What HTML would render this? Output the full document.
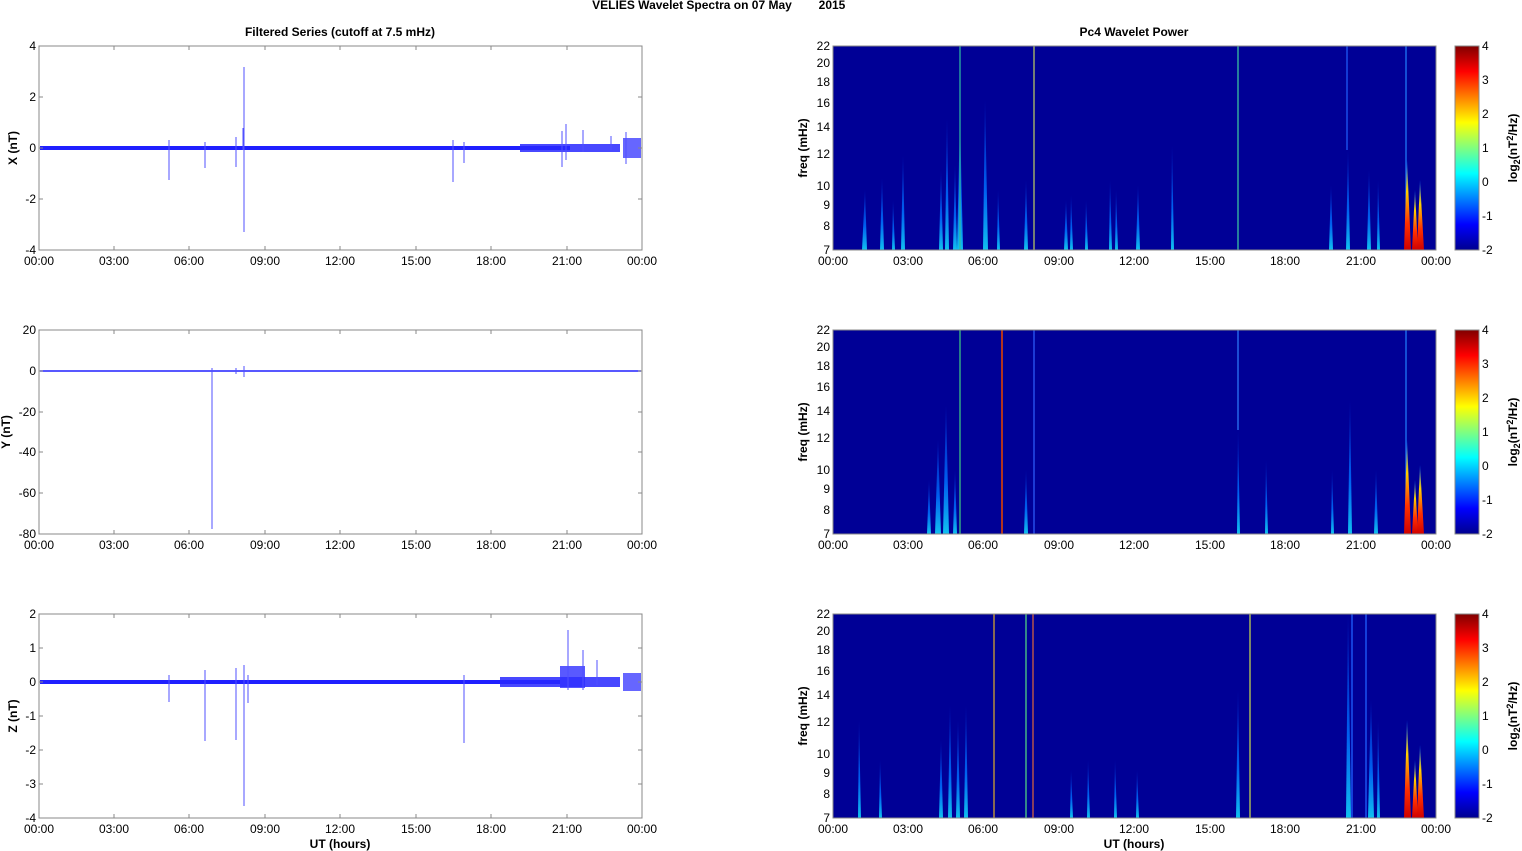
<!DOCTYPE html>
<html><head><meta charset="utf-8"><style>
html,body{margin:0;padding:0;background:#fff;}
svg{display:block;font-family:"Liberation Sans",Arial,sans-serif;}
.t{font-size:12px;fill:#000;}
.b{font-size:12px;font-weight:bold;fill:#000;}
</style></head><body>
<svg width="1522" height="851" viewBox="0 0 1522 851" xmlns="http://www.w3.org/2000/svg">
<defs>
<linearGradient id="jet" x1="0" y1="1" x2="0" y2="0">
<stop offset="0" stop-color="#00008f"/><stop offset="0.125" stop-color="#0000ff"/>
<stop offset="0.375" stop-color="#00ffff"/><stop offset="0.625" stop-color="#ffff00"/>
<stop offset="0.875" stop-color="#ff0000"/><stop offset="1" stop-color="#800000"/>
</linearGradient>
<linearGradient id="sg" x1="0" y1="0" x2="0" y2="1">
<stop offset="0" stop-color="#0010b0"/><stop offset="0.6" stop-color="#0060f0"/><stop offset="1" stop-color="#10c0f0"/>
</linearGradient>
<linearGradient id="hot" x1="0" y1="0" x2="0" y2="1">
<stop offset="0" stop-color="#0060ff"/><stop offset="0.35" stop-color="#ffd000"/><stop offset="0.7" stop-color="#ff3000"/><stop offset="1" stop-color="#d00000"/>
</linearGradient>
</defs>

<text x="692" y="9" class="b" text-anchor="middle">VELIES Wavelet Spectra on 07 May</text>
<text x="832" y="9" class="b" text-anchor="middle">2015</text>
<text x="340" y="36" class="b" text-anchor="middle">Filtered Series (cutoff at 7.5 mHz)</text>
<text x="1134" y="36" class="b" text-anchor="middle">Pc4 Wavelet Power</text>

<!-- Panel X -->
<g>
<rect x="39" y="46" width="603" height="204" fill="#fff" stroke="#888" stroke-width="1"/>
<rect x="40" y="146" width="530" height="4" fill="#2020ff"/>
<rect x="520" y="144" width="100" height="8" fill="#2828ff" opacity="0.85"/>
<rect x="623" y="138" width="18" height="20" fill="#4040ff" opacity="0.8"/>
<g stroke="#5050ff" stroke-width="1">
<line x1="244" y1="67" x2="244" y2="232"/><line x1="243" y1="128" x2="243" y2="150"/>
<line x1="169" y1="140" x2="169" y2="180"/><line x1="205" y1="142" x2="205" y2="168"/>
<line x1="236" y1="137" x2="236" y2="167"/><line x1="453" y1="140" x2="453" y2="182"/>
<line x1="464" y1="142" x2="464" y2="163"/><line x1="562" y1="131" x2="562" y2="167"/>
<line x1="566" y1="124" x2="566" y2="160"/><line x1="583" y1="130" x2="583" y2="152"/>
<line x1="611" y1="136" x2="611" y2="150"/><line x1="626" y1="132" x2="626" y2="164"/>
</g>
</g>
<!-- Panel Y -->
<g>
<rect x="39" y="330" width="603" height="204" fill="#fff" stroke="#888" stroke-width="1"/>
<line x1="40" y1="371" x2="641" y2="371" stroke="#2020ff" stroke-width="1.5"/>
<line x1="212" y1="368" x2="212" y2="529" stroke="#5050ff"/>
<line x1="244" y1="366" x2="244" y2="377" stroke="#5050ff"/>
<line x1="236" y1="368" x2="236" y2="374" stroke="#5050ff"/>
</g>
<!-- Panel Z -->
<g>
<rect x="39" y="614" width="603" height="204" fill="#fff" stroke="#888" stroke-width="1"/>
<rect x="40" y="680" width="520" height="4" fill="#2020ff"/>
<rect x="500" y="677" width="120" height="10" fill="#2828ff" opacity="0.85"/>
<rect x="560" y="666" width="25" height="22" fill="#3030ff" opacity="0.8"/>
<rect x="623" y="673" width="18" height="18" fill="#4040ff" opacity="0.8"/>
<g stroke="#5050ff" stroke-width="1">
<line x1="244" y1="665" x2="244" y2="806"/><line x1="205" y1="670" x2="205" y2="741"/>
<line x1="236" y1="668" x2="236" y2="740"/><line x1="248" y1="675" x2="248" y2="703"/>
<line x1="169" y1="675" x2="169" y2="702"/><line x1="464" y1="675" x2="464" y2="743"/>
<line x1="568" y1="630" x2="568" y2="690"/><line x1="583" y1="650" x2="583" y2="690"/>
<line x1="597" y1="660" x2="597" y2="685"/>
</g>
</g>

<g stroke="#888" stroke-width="1">
<path d="M114,46v4M189,46v4M265,46v4M340,46v4M416,46v4M491,46v4M567,46v4M114,250v-4M189,250v-4M265,250v-4M340,250v-4M416,250v-4M491,250v-4M567,250v-4M39,97h4M39,148h4M39,199h4M642,97h-4M642,148h-4M642,199h-4"/>
<path d="M114,330v4M189,330v4M265,330v4M340,330v4M416,330v4M491,330v4M567,330v4M114,534v-4M189,534v-4M265,534v-4M340,534v-4M416,534v-4M491,534v-4M567,534v-4M39,371h4M39,412h4M39,452h4M39,493h4M642,371h-4M642,412h-4M642,452h-4M642,493h-4"/>
<path d="M114,614v4M189,614v4M265,614v4M340,614v4M416,614v4M491,614v4M567,614v4M114,818v-4M189,818v-4M265,818v-4M340,818v-4M416,818v-4M491,818v-4M567,818v-4M39,648h4M39,682h4M39,716h4M39,750h4M39,784h4M642,648h-4M642,682h-4M642,716h-4M642,750h-4M642,784h-4"/>
</g>
<g class="t" text-anchor="end">
<text x="36" y="50">4</text><text x="36" y="101">2</text><text x="36" y="152">0</text><text x="36" y="203">-2</text><text x="36" y="254">-4</text>
<text x="36" y="334">20</text><text x="36" y="375">0</text><text x="36" y="416">-20</text><text x="36" y="456">-40</text><text x="36" y="497">-60</text><text x="36" y="538">-80</text>
<text x="36" y="618">2</text><text x="36" y="652">1</text><text x="36" y="686">0</text><text x="36" y="720">-1</text><text x="36" y="754">-2</text><text x="36" y="788">-3</text><text x="36" y="822">-4</text>
</g>
<g class="b" text-anchor="middle">
<text transform="translate(17,148) rotate(-90)">X (nT)</text>
<text transform="translate(10,432) rotate(-90)">Y (nT)</text>
<text transform="translate(17,716) rotate(-90)">Z (nT)</text>
<text transform="translate(807,148) rotate(-90)">freq (mHz)</text>
<text transform="translate(807,432) rotate(-90)">freq (mHz)</text>
<text transform="translate(807,716) rotate(-90)">freq (mHz)</text>
<text x="340" y="848">UT (hours)</text>
<text x="1134" y="848">UT (hours)</text>
</g>
<g class="t" text-anchor="middle">
<g><text x="39" y="265">00:00</text><text x="114" y="265">03:00</text><text x="189" y="265">06:00</text><text x="265" y="265">09:00</text><text x="340" y="265">12:00</text><text x="416" y="265">15:00</text><text x="491" y="265">18:00</text><text x="567" y="265">21:00</text><text x="642" y="265">00:00</text></g>
<g transform="translate(0,284)"><text x="39" y="265">00:00</text><text x="114" y="265">03:00</text><text x="189" y="265">06:00</text><text x="265" y="265">09:00</text><text x="340" y="265">12:00</text><text x="416" y="265">15:00</text><text x="491" y="265">18:00</text><text x="567" y="265">21:00</text><text x="642" y="265">00:00</text></g>
<g transform="translate(0,568)"><text x="39" y="265">00:00</text><text x="114" y="265">03:00</text><text x="189" y="265">06:00</text><text x="265" y="265">09:00</text><text x="340" y="265">12:00</text><text x="416" y="265">15:00</text><text x="491" y="265">18:00</text><text x="567" y="265">21:00</text><text x="642" y="265">00:00</text></g>
<g transform="translate(794,0)"><text x="39" y="265">00:00</text><text x="114" y="265">03:00</text><text x="189" y="265">06:00</text><text x="265" y="265">09:00</text><text x="340" y="265">12:00</text><text x="416" y="265">15:00</text><text x="491" y="265">18:00</text><text x="567" y="265">21:00</text><text x="642" y="265">00:00</text></g>
<g transform="translate(794,284)"><text x="39" y="265">00:00</text><text x="114" y="265">03:00</text><text x="189" y="265">06:00</text><text x="265" y="265">09:00</text><text x="340" y="265">12:00</text><text x="416" y="265">15:00</text><text x="491" y="265">18:00</text><text x="567" y="265">21:00</text><text x="642" y="265">00:00</text></g>
<g transform="translate(794,568)"><text x="39" y="265">00:00</text><text x="114" y="265">03:00</text><text x="189" y="265">06:00</text><text x="265" y="265">09:00</text><text x="340" y="265">12:00</text><text x="416" y="265">15:00</text><text x="491" y="265">18:00</text><text x="567" y="265">21:00</text><text x="642" y="265">00:00</text></g>
</g>

<!-- Panel 1 -->
<g>
<rect x="833" y="46" width="603" height="204" fill="#000096"/>
<g fill="url(#sg)">
<polygon points="862,250 865,190 867,250"/><polygon points="880,250 882,178 884,250"/>
<polygon points="892,250 893,200 895,250"/><polygon points="901,250 903,155 905,250"/>
<polygon points="939,250 941,170 943,250"/><polygon points="945,250 947,118 949,250"/>
<polygon points="953,250 955,165 957,250"/><polygon points="957,250 960,115 963,250"/>
<polygon points="983,250 985,100 988,250"/><polygon points="997,250 998,190 1000,250"/>
<polygon points="1024,250 1026,180 1028,250"/><polygon points="1064,250 1066,200 1068,250"/>
<polygon points="1070,250 1071,195 1073,250"/><polygon points="1085,250 1086,200 1088,250"/>
<polygon points="1109,250 1110,180 1112,250"/><polygon points="1115,250 1116,190 1118,250"/>
<polygon points="1136,250 1138,185 1140,250"/><polygon points="1171,250 1172,145 1174,250"/>
<polygon points="1329,250 1331,185 1333,250"/><polygon points="1346,250 1348,150 1350,250"/>
<polygon points="1367,250 1369,170 1371,250"/><polygon points="1377,250 1378,180 1380,250"/>
</g>
<g stroke-width="1.2">
<line x1="960" y1="46" x2="960" y2="250" stroke="#30c0a0"/>
<line x1="1034" y1="46" x2="1034" y2="250" stroke="#c0d060"/>
<line x1="1238" y1="46" x2="1238" y2="250" stroke="#40d0a0"/>
<line x1="1347" y1="46" x2="1347" y2="150" stroke="#2060ff"/>
<line x1="1406" y1="46" x2="1406" y2="250" stroke="#2080ff"/>
</g>
<polygon points="1404,250 1407,160 1411,250" fill="url(#hot)"/>
<polygon points="1412,250 1415,190 1418,250" fill="url(#hot)"/>
<polygon points="1417,250 1420,180 1424,250" fill="url(#hot)"/>
<rect x="833" y="46" width="603" height="204" fill="none" stroke="#888"/>
</g>
<!-- Panel 2 -->
<g>
<rect x="833" y="330" width="603" height="204" fill="#000096"/>
<g fill="url(#sg)">
<polygon points="927,534 929,480 931,534"/><polygon points="935,534 938,440 941,534"/>
<polygon points="943,534 946,405 949,534"/><polygon points="953,534 955,470 957,534"/>
<polygon points="1024,534 1026,470 1028,534"/><polygon points="1237,534 1238,430 1240,534"/>
<polygon points="1265,534 1266,460 1268,534"/><polygon points="1331,534 1332,470 1334,534"/>
<polygon points="1348,534 1350,400 1352,534"/><polygon points="1374,534 1376,470 1378,534"/>
</g>
<g stroke-width="1.2">
<line x1="960" y1="330" x2="960" y2="534" stroke="#40d080"/>
<line x1="1002" y1="330" x2="1002" y2="534" stroke="#e04000" stroke-width="1.6"/>
<line x1="1034" y1="330" x2="1034" y2="534" stroke="#3060ff"/>
<line x1="1238" y1="330" x2="1238" y2="430" stroke="#3080ff"/>
<line x1="1406" y1="330" x2="1406" y2="534" stroke="#2080ff"/>
</g>
<polygon points="1404,534 1407,440 1411,534" fill="url(#hot)"/>
<polygon points="1412,534 1415,480 1418,534" fill="url(#hot)"/>
<polygon points="1417,534 1420,465 1424,534" fill="url(#hot)"/>
<rect x="833" y="330" width="603" height="204" fill="none" stroke="#888"/>
</g>
<!-- Panel 3 -->
<g>
<rect x="833" y="614" width="603" height="204" fill="#000096"/>
<g fill="url(#sg)">
<polygon points="858,818 859,720 861,818"/><polygon points="879,818 880,760 882,818"/>
<polygon points="939,818 941,740 943,818"/><polygon points="948,818 950,705 952,818"/>
<polygon points="956,818 958,720 960,818"/><polygon points="964,818 966,705 968,818"/>
<polygon points="1070,818 1071,770 1073,818"/><polygon points="1087,818 1088,760 1090,818"/>
<polygon points="1114,818 1115,760 1117,818"/><polygon points="1136,818 1137,770 1139,818"/>
<polygon points="1236,818 1238,690 1240,818"/><polygon points="1346,818 1348,614 1351,818"/>
<polygon points="1368,818 1371,700 1374,818"/><polygon points="1377,818 1378,720 1380,818"/>
</g>
<g stroke-width="1.3">
<line x1="994" y1="614" x2="994" y2="818" stroke="#d0a030"/>
<line x1="1026" y1="614" x2="1026" y2="818" stroke="#50d080"/>
<line x1="1033" y1="614" x2="1033" y2="818" stroke="#d06040"/>
<line x1="1250" y1="614" x2="1250" y2="818" stroke="#c0d050"/>
<line x1="1352" y1="614" x2="1352" y2="818" stroke="#2060ff"/>
<line x1="1366" y1="614" x2="1366" y2="818" stroke="#2060ff"/>
</g>
<polygon points="1404,818 1407,720 1411,818" fill="url(#hot)"/>
<polygon points="1412,818 1415,760 1418,818" fill="url(#hot)"/>
<polygon points="1417,818 1420,745 1424,818" fill="url(#hot)"/>
<rect x="833" y="614" width="603" height="204" fill="none" stroke="#888"/>
</g>

<g class="t" text-anchor="end">
<g><text x="830" y="50">22</text><text x="830" y="67">20</text><text x="830" y="86">18</text><text x="830" y="107">16</text><text x="830" y="131">14</text><text x="830" y="158">12</text><text x="830" y="190">10</text><text x="830" y="209">9</text><text x="830" y="230">8</text><text x="830" y="254">7</text></g>
<g transform="translate(0,284)"><text x="830" y="50">22</text><text x="830" y="67">20</text><text x="830" y="86">18</text><text x="830" y="107">16</text><text x="830" y="131">14</text><text x="830" y="158">12</text><text x="830" y="190">10</text><text x="830" y="209">9</text><text x="830" y="230">8</text><text x="830" y="254">7</text></g>
<g transform="translate(0,568)"><text x="830" y="50">22</text><text x="830" y="67">20</text><text x="830" y="86">18</text><text x="830" y="107">16</text><text x="830" y="131">14</text><text x="830" y="158">12</text><text x="830" y="190">10</text><text x="830" y="209">9</text><text x="830" y="230">8</text><text x="830" y="254">7</text></g>
</g>

<g>
<rect x="1455" y="46" width="24" height="204" fill="url(#jet)" stroke="#888"/>
<rect x="1455" y="330" width="24" height="204" fill="url(#jet)" stroke="#888"/>
<rect x="1455" y="614" width="24" height="204" fill="url(#jet)" stroke="#888"/>
</g>
<g class="t">
<g><text x="1482" y="50">4</text><text x="1482" y="84">3</text><text x="1482" y="118">2</text><text x="1482" y="152">1</text><text x="1482" y="186">0</text><text x="1482" y="220">-1</text><text x="1482" y="254">-2</text></g>
<g transform="translate(0,284)"><text x="1482" y="50">4</text><text x="1482" y="84">3</text><text x="1482" y="118">2</text><text x="1482" y="152">1</text><text x="1482" y="186">0</text><text x="1482" y="220">-1</text><text x="1482" y="254">-2</text></g>
<g transform="translate(0,568)"><text x="1482" y="50">4</text><text x="1482" y="84">3</text><text x="1482" y="118">2</text><text x="1482" y="152">1</text><text x="1482" y="186">0</text><text x="1482" y="220">-1</text><text x="1482" y="254">-2</text></g>
</g>
<g class="b" text-anchor="middle">
<text transform="translate(1517,148) rotate(-90)">log<tspan font-size="9" dy="3">2</tspan><tspan dy="-3">(nT</tspan><tspan font-size="9" dy="-4">2</tspan><tspan dy="4">/Hz)</tspan></text>
<text transform="translate(1517,432) rotate(-90)">log<tspan font-size="9" dy="3">2</tspan><tspan dy="-3">(nT</tspan><tspan font-size="9" dy="-4">2</tspan><tspan dy="4">/Hz)</tspan></text>
<text transform="translate(1517,716) rotate(-90)">log<tspan font-size="9" dy="3">2</tspan><tspan dy="-3">(nT</tspan><tspan font-size="9" dy="-4">2</tspan><tspan dy="4">/Hz)</tspan></text>
</g>
</svg>
</body></html>
